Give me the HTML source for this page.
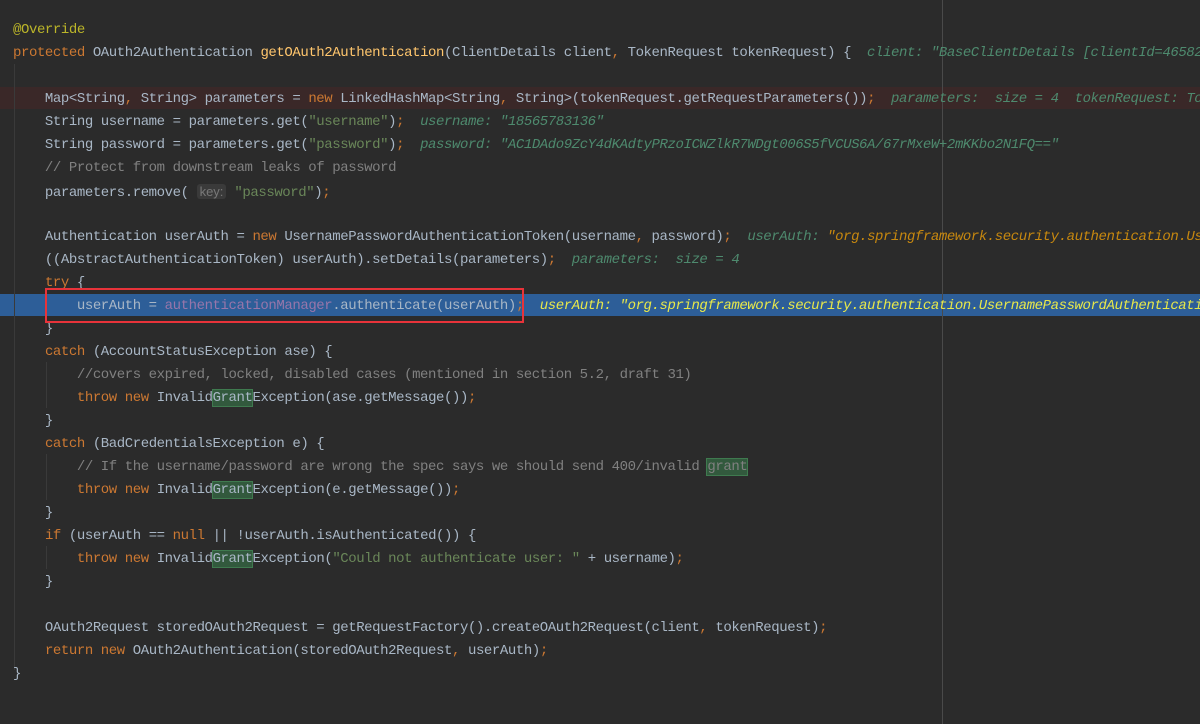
<!DOCTYPE html>
<html><head><meta charset="utf-8"><style>
body{margin:0;width:1200px;height:724px;background:#2b2b2b;overflow:hidden;position:relative;font-family:"Liberation Mono",monospace;font-size:14px;letter-spacing:-0.42px;color:#a9b7c6}
.l{position:absolute;left:13px;height:23px;line-height:23px;white-space:pre;width:1187px;margin-top:2px}
.k{color:#cc7832}.a{color:#bbb529}.m{color:#ffc66d}.s{color:#6a8759}.c{color:#808080}.f{color:#9876aa}
.h{color:#4e8a6e;font-style:italic}.ho{color:#c7880f;font-style:italic}.hy{color:#e8e84a;font-style:italic}
.g{background:#32593d;outline:1px solid #3f7a4f}
.key{background:#3a3a3a;color:#787878;border-radius:3px;font-family:"Liberation Sans",sans-serif;letter-spacing:0;padding:0 3px;font-size:13px}
.bp{position:absolute;left:0;width:1200px;top:87px;height:22px;background:#3a2828}
.sel{position:absolute;left:0;width:1200px;top:294px;height:22px;background:#2d5e98}
.mg{position:absolute;left:942px;top:0;width:1px;height:724px;background:#4a4a4a}
.ig{position:absolute;width:1px;background:#3a3a3a}
.box{position:absolute;left:45px;top:288px;width:475px;height:31px;border:2px solid #e8333a}
</style></head><body>
<div class="bp"></div><div class="sel"></div><div class="mg"></div>
<div class="ig" style="left:14px;top:64px;height:606px"></div>
<div class="ig" style="left:46px;top:362px;height:46px"></div>
<div class="ig" style="left:46px;top:454px;height:46px"></div>
<div class="ig" style="left:46px;top:546px;height:23px"></div>
<div class="l" style="top:17px"><span class="a">@Override</span></div>
<div class="l" style="top:40px"><span class="k">protected </span>OAuth2Authentication <span class="m">getOAuth2Authentication</span>(ClientDetails client<span class="k">, </span>TokenRequest tokenRequest) {  <span class="h">client: "BaseClientDetails [clientId=46582</span></div>
<div class="l" style="top:86px">    Map&lt;String<span class="k">, </span>String&gt; parameters = <span class="k">new </span>LinkedHashMap&lt;String<span class="k">, </span>String&gt;(tokenRequest.getRequestParameters())<span class="k">;</span>  <span class="h">parameters:  size = 4  tokenRequest: To</span></div>
<div class="l" style="top:109px">    String username = parameters.get(<span class="s">"username"</span>)<span class="k">;</span>  <span class="h">username: "18565783136"</span></div>
<div class="l" style="top:132px">    String password = parameters.get(<span class="s">"password"</span>)<span class="k">;</span>  <span class="h">password: "AC1DAdo9ZcY4dKAdtyPRzoICWZlkR7WDgt006S5fVCUS6A/67rMxeW+2mKKbo2N1FQ=="</span></div>
<div class="l" style="top:155px"><span class="c">    // Protect from downstream leaks of password</span></div>
<div class="l" style="top:178px">    parameters.remove( <span class="key">key:</span> <span class="s">"password"</span>)<span class="k">;</span></div>
<div class="l" style="top:224px">    Authentication userAuth = <span class="k">new </span>UsernamePasswordAuthenticationToken(username<span class="k">, </span>password)<span class="k">;</span>  <span class="h">userAuth: </span><span class="ho">"org.springframework.security.authentication.Us</span></div>
<div class="l" style="top:247px">    ((AbstractAuthenticationToken) userAuth).setDetails(parameters)<span class="k">;</span>  <span class="h">parameters:  size = 4</span></div>
<div class="l" style="top:270px">    <span class="k">try </span>{</div>
<div class="l" style="top:293px">        userAuth = <span class="f">authenticationManager</span>.authenticate(userAuth)<span class="k">;</span>  <span class="hy">userAuth: "org.springframework.security.authentication.UsernamePasswordAuthenticati</span></div>
<div class="l" style="top:316px">    }</div>
<div class="l" style="top:339px">    <span class="k">catch </span>(AccountStatusException ase) {</div>
<div class="l" style="top:362px"><span class="c">        //covers expired, locked, disabled cases (mentioned in section 5.2, draft 31)</span></div>
<div class="l" style="top:385px">        <span class="k">throw new </span>Invalid<span class="g">Grant</span>Exception(ase.getMessage())<span class="k">;</span></div>
<div class="l" style="top:408px">    }</div>
<div class="l" style="top:431px">    <span class="k">catch </span>(BadCredentialsException e) {</div>
<div class="l" style="top:454px"><span class="c">        // If the username/password are wrong the spec says we should send 400/invalid <span class="g">grant</span></span></div>
<div class="l" style="top:477px">        <span class="k">throw new </span>Invalid<span class="g">Grant</span>Exception(e.getMessage())<span class="k">;</span></div>
<div class="l" style="top:500px">    }</div>
<div class="l" style="top:523px">    <span class="k">if </span>(userAuth == <span class="k">null </span>|| !userAuth.isAuthenticated()) {</div>
<div class="l" style="top:546px">        <span class="k">throw new </span>Invalid<span class="g">Grant</span>Exception(<span class="s">"Could not authenticate user: "</span> + username)<span class="k">;</span></div>
<div class="l" style="top:569px">    }</div>
<div class="l" style="top:615px">    OAuth2Request storedOAuth2Request = getRequestFactory().createOAuth2Request(client<span class="k">, </span>tokenRequest)<span class="k">;</span></div>
<div class="l" style="top:638px">    <span class="k">return new </span>OAuth2Authentication(storedOAuth2Request<span class="k">, </span>userAuth)<span class="k">;</span></div>
<div class="l" style="top:661px">}</div>
<div class="box"></div>
</body></html>
